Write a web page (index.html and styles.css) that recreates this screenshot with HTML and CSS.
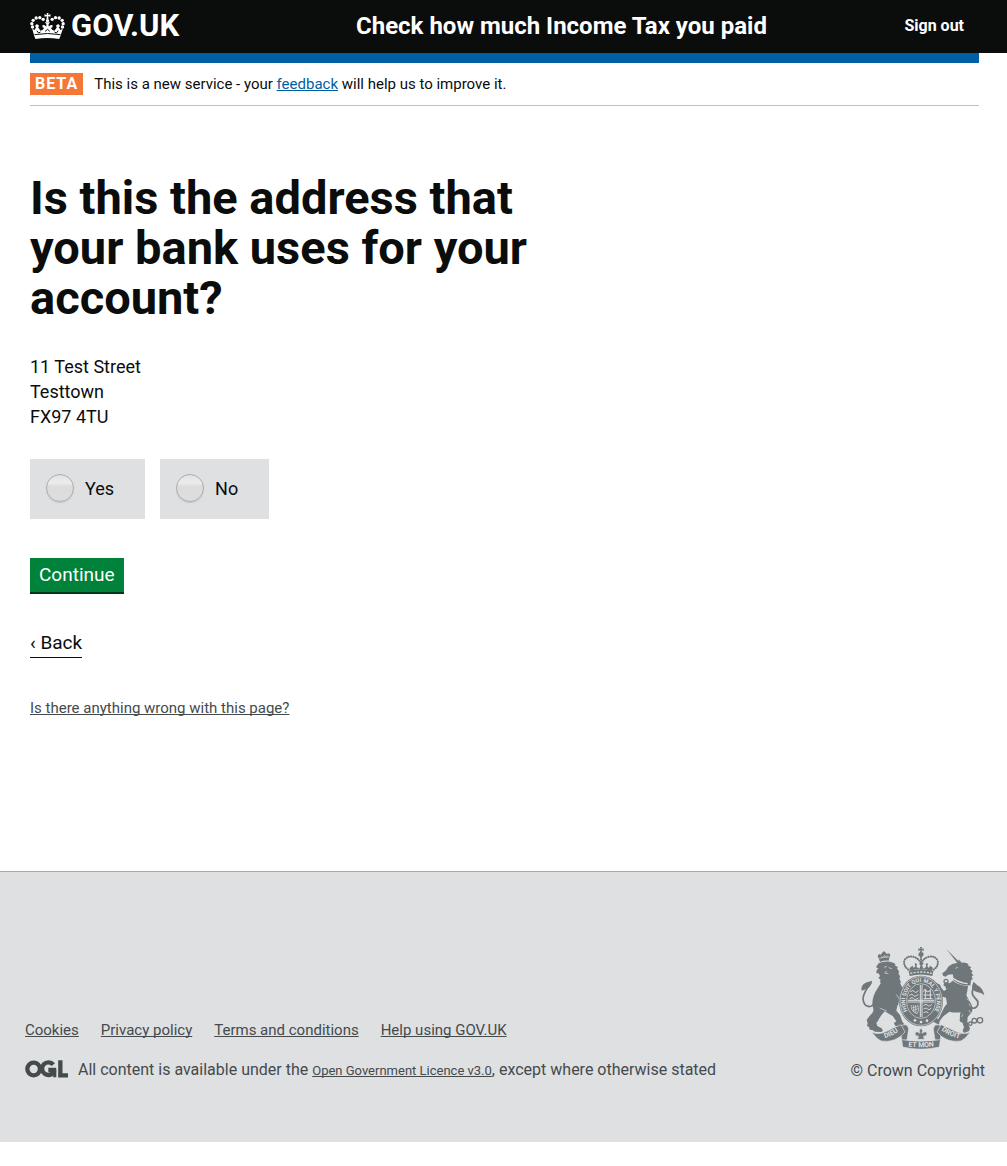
FILE: index.html
```html
<!DOCTYPE html>
<html lang="en">
<head>
<meta charset="utf-8">
<meta name="viewport" content="width=device-width, initial-scale=1">
<title>Is this the address that your bank uses for your account? - GOV.UK</title>
<link rel="stylesheet" href="styles.css">
</head>
<body>
<header class="site-header">
  <a class="brand" href="#">
    <svg class="brand-crown" viewBox="30 38 104 78" aria-hidden="true">
      <g fill="#fff">
        <circle cx="82" cy="61" r="5"/>
        <path d="M80 38h5l-1 6 7-2v7l-7-1 1 8h-6l1-8-7 1v-7l7 2z"/>
        <circle cx="69" cy="57" r="5"/><circle cx="59" cy="52" r="5"/><circle cx="48" cy="53" r="5"/><circle cx="39" cy="60" r="5"/><circle cx="35" cy="70" r="5"/><circle cx="37" cy="80" r="5"/>
        <circle cx="96" cy="57" r="5"/><circle cx="106" cy="52" r="5"/><circle cx="117" cy="53" r="5"/><circle cx="126" cy="60" r="5"/><circle cx="129" cy="70" r="5"/><circle cx="127" cy="80" r="5"/>
        <path d="M36 85l7 4 5-8-4-4 6-6 7 5-3 5 7 10 6-2 5-6-5-2v-7l7 1 4 4 1-7-5-6h16l-5 6 1 7 4-4 7-1v7l-5 2 5 6 6 2 7-10-3-5 7-5 6 6-4 4 5 8 7-4-8 24-3 7q-35-6-71 0l-3-7z"/>
      </g>
      <path d="M43 103q39-7 78 0M50 91l5 7 6-3M114 91l-5 7-6-3M75 93l7-6 7 6" fill="none" stroke="#0b0c0c" stroke-width="3"/>
    </svg>
    <span>GOV.UK</span>
  </a>
  <a class="service-name" href="#">Check how much Income Tax you paid</a>
  <a class="sign-out" href="#">Sign out</a>
</header>

<div class="content">
  <div class="beta-banner">
    <strong class="beta-tag">BETA</strong>
    <span>This is a new service - your <a href="#">feedback</a> will help us to improve it.</span>
  </div>
  <main>
    <form>
      <h1>Is this the address that your bank uses for your account?</h1>
      <address>11 Test Street<br>Testtown<br>FX97 4TU</address>
      <div class="choices" role="radiogroup" aria-label="Is this the address that your bank uses for your account?">
        <label class="choice"><input type="radio" name="address" value="yes">Yes</label>
        <label class="choice"><input type="radio" name="address" value="no">No</label>
      </div>
      <button class="continue" type="button">Continue</button>
    </form>
    <a class="back" href="#">‹ Back</a>
    <a class="report" href="#">Is there anything wrong with this page?</a>
  </main>
</div>

<footer class="site-footer">
  <div class="footer-meta">
    <ul class="footer-links">
      <li><a href="#">Cookies</a></li>
      <li><a href="#">Privacy policy</a></li>
      <li><a href="#">Terms and conditions</a></li>
      <li><a href="#">Help using GOV.UK</a></li>
    </ul>
    <div class="licence">
      <svg class="ogl" viewBox="30 149 129 54" role="img" aria-label="Open Government Licence">
        <g fill="none" stroke="#454a4d" stroke-width="13">
          <circle cx="56" cy="176" r="19"/>
          <path d="M115 163A19 19 0 1 0 117 184L117 179H100"/>
          <path d="M136 150V195H159"/>
        </g>
        <path d="M117 177h7v24h-10z" fill="#454a4d"/>
      </svg>
      <span>All content is available under the <a class="licence-link" href="#">Open Government Licence v3.0</a>, except where otherwise stated</span>
    </div>
  </div>
  <a class="copyright" href="#">
    <svg class="arms" viewBox="45 36 375 306" aria-hidden="true">
      <defs>
        <path id="garter" d="M198 242A47 57 0 1 1 258 242"/>
        <path id="scroll-left" d="M110 312Q142 306 168 282"/>
        <path id="scroll-mid" d="M182 333Q228 340 275 333"/>
        <path id="scroll-right" d="M284 282Q310 304 350 312"/>
      </defs>
      <g fill="#6f777b">
        <!-- lion -->
        <path d="M98 63l4-6 6 2 3-5 3-4 4-1 4 4 4 4 6-2 4 5-3 8-2 9q-14-1-26 4l-3-9z"/>
        <path d="M101 85q15-7 33-5 13 2 18 8l-3 3 10 6-3 3 7 11-3 2 6 14-3 2 5 14-3 1q8 18 15 27l10 7-4 8-8-3-4 7-7-5-6 4q3 14-4 24l-3 14 11 13 7 20 5 6-3 8-23-1-4-9 7-5-11-16-24-14q-16 18-20 29l-5 5 3 10 13 7 4 7-5 4-19-1-8-5-8-1-2-8-6-3 2-9-3-9 8-11 9-10q6-8 1-19-4-28 14-54l11-18-4-2 3-6-7-7 5-4-3-8-8-2 1-8 5-6-7-3 4-7z"/>
        <path d="M50 167q-3-12 6-20 7-6 16-7l9-3q-1 11-7 18-7 7-24 12z"/>
        <!-- unicorn -->
        <path d="M304 42l42 42-5 5z"/>
        <path d="M340 84l1-11 9 10q13-2 21 5l-3 3 11 6-4 4 8 8-4 4 6 8-5 3 3 9-5 2-2 16q-30 3-52-16 2-12-1-17l-14 1-7 6-8-3-2-7 10-8 9-13q10-9 24-10z"/>
        <path d="M323 137q16 13 46 16l-2 14-3 14q8 16 14 25 8 12 2 26l-12 14-1 16 8 18-3 8-14 6-5-6 5-16-11-16q-5-12 0-24-18 2-34-2l-18 14-11 14-2 11-16-8 5-9 10-1 11-22q4-13 14-23l-3-18-17-5-12-16-7-14 6-10 12 6 4 10 8 9 11-7-13-11 5-8 14 3z"/>
        <path d="M382 163q-3-12 4-23 8 9 18 15 10 8 14 26-10-9-20-9-10-1-16-9z"/>
      </g>
      <g fill="none" stroke="#6f777b">
        <path d="M79 142q-22 28-25 48 1 23 18 25 16-1 17-20" stroke-width="5"/>
        <path d="M386 158q-10 19 4 31 15 13 5 26-8 9-20 1" stroke-width="5"/>
        <g stroke-width="4"><circle cx="352" cy="254" r="6"/><circle cx="362" cy="268" r="6"/><circle cx="376" cy="266" r="5"/><circle cx="388" cy="257" r="7"/><circle cx="405" cy="256" r="8"/><circle cx="303" cy="139" r="6"/><circle cx="309" cy="158" r="5"/></g>
      </g>
      <g fill="none" stroke="#dee0e2" stroke-width="2">
        <path d="M103 70q14-5 29-4M109 64l5 4 5-7 5 6 5-6"/>
        <path d="M117 97l9-3M131 98l10 3M126 108l-7 6 11 2M153 178l13 16M104 219l22 9"/>
        <path d="M331 100l8-3"/>
        <path d="M324 130q20 14 44 16" stroke-width="4"/>
        <path d="M365 190l6 7M372 206l5 8M372 225l4 9M354 238l-5 8"/>
      </g>
      <!-- crown above the shield -->
      <g fill="#6f777b">
        <path d="M225 36h6l-1 6 6-2v8l-6-2 1 6q6 1 5 7t-8 6q-8 0-8-6t5-7l1-6-6 2v-8l6 2z"/>
        <path d="M191 107q37-9 74 0l-3 16q-34-9-68 0z"/>
        <path d="M194 99l8-7 5 7 4-6-2-7 4-2 3 5-2 6 9 6 4-10-5-5 4-5h6l4 5-5 5 4 10 9-6-2-6 3-5 4 2-2 7 4 6 5-7 8 7-4 8q-34-8-66 0z"/>
      </g>
      <g fill="none" stroke="#6f777b" stroke-width="6" stroke-linecap="round" stroke-dasharray="1 6">
        <path d="M190 104Q174 92 178 76 189 60 207 66 220 70 226 82"/>
        <path d="M266 104Q282 92 278 76 267 60 249 66 236 70 230 82"/>
        <path d="M228 66V94"/>
      </g>
      <path d="M196 115q32-8 64 0" fill="none" stroke="#dee0e2" stroke-width="4" stroke-dasharray="6 4"/>
      <!-- garter and shield -->
      <ellipse cx="228" cy="198" rx="66" ry="76" fill="#6f777b"/>
      <ellipse cx="228" cy="198" rx="63" ry="73" fill="none" stroke="#dee0e2" stroke-width="2"/>
      <ellipse cx="228" cy="198" rx="43" ry="52" fill="#6f777b" stroke="#dee0e2" stroke-width="2"/>
      <g stroke="#dee0e2" stroke-width="3" fill="none">
        <path d="M226 150V246M231 150V246M188 196H268M188 201H268"/>
        <path d="M196 170q9-7 12 0t12-3M193 181q9-7 12 0t15-3M194 191q9-6 12 0t14-2M235 170l6-8 5 9 10-4M236 180h26M241 165v28M256 163v28M236 191h27"/>
        <path d="M236 211q9-6 12 0t13-3M236 222q9-6 12 0t11-3M236 233q8-6 14 0"/>
        <path d="M199 210q-4 17 17 26 8-10 2-27M205 210l2 22M211 210l2 25M200 219l19-5M203 226l17-5" stroke-width="2"/>
      </g>
      <text class="arms-motto" text-anchor="middle"><textPath href="#garter" startOffset="50%">HONI SOIT QUI MAL Y PENSE</textPath></text>
      <g fill="#dee0e2"><circle cx="210" cy="256" r="4"/><circle cx="228" cy="261" r="4"/><circle cx="246" cy="257" r="4"/></g>
      <!-- motto scroll -->
      <g fill="#6f777b" stroke="#dee0e2" stroke-width="2">
        <path d="M168 272q20-9 23 10l-5 33-16 2-2-23-14-6z"/>
        <path d="M288 272q-20-9-23 10l5 33 16 2 2-23 14-6z"/>
        <path d="M80 291q20 10 45-2 26-14 43-20l12 22q-28 34-72 27l-13-9z"/>
        <path d="M376 291q-20 10-45-2-26-14-43-20l-12 22q28 34 72 27l13-9z"/>
        <path d="M170 314q58 9 116 0l-3 22q-55 13-110 0z"/>
      </g>
      <text class="arms-scroll" text-anchor="middle"><textPath href="#scroll-left" startOffset="50%">DIEU</textPath></text>
      <text class="arms-scroll" text-anchor="middle"><textPath href="#scroll-mid" startOffset="50%">ET MON</textPath></text>
      <text class="arms-scroll" text-anchor="middle"><textPath href="#scroll-right" startOffset="50%">DROIT</textPath></text>
      <path d="M228 279q8 7 3 16 12-10 15 1-1 8-11 8l4 9h-22l4-9q-10 0-11-8 3-11 15-1-5-9 3-16z" fill="#6f777b" stroke="#dee0e2" stroke-width="2"/>
    </svg>
    <span>© Crown Copyright</span>
  </a>
</footer>
</body>
</html>
```
FILE: styles.css
```css
* { box-sizing: border-box; }

body {
  margin: 0;
  background: #fff;
  color: #0b0c0c;
  font-family: Roboto, "Liberation Sans", sans-serif;
  font-size: 19px;
  line-height: 25px;
}

a { text-decoration-skip-ink: none; }

.site-header {
  display: grid;
  grid-template-columns: 326px 1fr auto;
  align-items: center;
  height: 53px;
  padding: 0 43px 2px 30px;
  background: #0b0c0c;
}
.site-header a { color: #fff; font-weight: 700; text-decoration: none; }
.brand { display: flex; align-items: center; gap: 6px; font-size: 31px; line-height: 30px; }
.brand-crown { width: 35px; height: 26px; }
.service-name { font-size: 24px; line-height: 30px; }
.site-header .sign-out { font-size: 16px; line-height: 20px; }

.content { padding: 0 28px 0 30px; }

.beta-banner {
  display: flex;
  align-items: center;
  gap: 11px;
  height: 53px;
  border-top: 10px solid #005ea5;
  border-bottom: 1px solid #bfc1c3;
  font-size: 15px;
  line-height: 20px;
}
.beta-banner a { color: #005ea5; }
.beta-tag {
  padding: 0 5px;
  background: #f47738;
  color: #fff;
  font-size: 16px;
  line-height: 22px;
  letter-spacing: 1px;
}

h1 {
  width: 55%;
  margin: 67px 0 31px;
  font-size: 47px;
  line-height: 50px;
  font-weight: 700;
}
address { margin-bottom: 30px; font-size: 18px; font-style: normal; }

.choices { display: flex; gap: 15px; margin-bottom: 39px; }
.choice {
  display: flex;
  align-items: center;
  gap: 11px;
  height: 60px;
  padding: 0 31px 2px 16px;
  background: #dee0e2;
  font-size: 18px;
}
.choice input {
  appearance: none;
  width: 28px;
  height: 28px;
  margin: 0;
  border: 1px solid #adadad;
  border-radius: 50%;
  background: linear-gradient(#e2e2e2, #ececec 30%, #dcdcdc 45%, #dedede);
  box-shadow: 0 1px 1px #c4c5c6;
}

.continue {
  display: block;
  height: 34px;
  padding: 0 9px 2px;
  border: 0;
  background: #00823b;
  box-shadow: 0 2px 0 #003618;
  color: #fff;
  font: inherit;
}

.back {
  display: block;
  width: fit-content;
  margin-top: 38px;
  padding-bottom: 2px;
  border-bottom: 1px solid #0b0c0c;
  color: #0b0c0c;
  text-decoration: none;
}
.report {
  display: block;
  width: fit-content;
  margin-top: 40px;
  color: #454a4d;
  font-size: 15px;
  line-height: 20px;
}

.site-footer {
  display: flex;
  justify-content: space-between;
  align-items: flex-end;
  margin: 153px 0 24px;
  padding: 75px 22px 61px 25px;
  border-top: 1px solid #a1acb2;
  background: #dee0e2;
  color: #454a4d;
  font-size: 16px;
  line-height: 20px;
}
.site-footer a { color: #454a4d; }
.footer-links { display: flex; gap: 22px; margin: 0 0 20px; padding: 0; font-size: 15px; list-style: none; }
.licence { display: flex; align-items: flex-start; gap: 10px; }
.ogl { width: 43px; height: 18px; }
.licence-link { font-size: 13px; }
.site-footer .copyright {
  display: flex;
  flex-direction: column;
  align-items: flex-end;
  gap: 12px;
  text-decoration: none;
}
.arms { width: 125px; height: 102px; }
.arms-motto { fill: #dee0e2; font-size: 17px; font-weight: 700; }
.arms-scroll { fill: #dee0e2; font-size: 21px; font-weight: 700; }
```
